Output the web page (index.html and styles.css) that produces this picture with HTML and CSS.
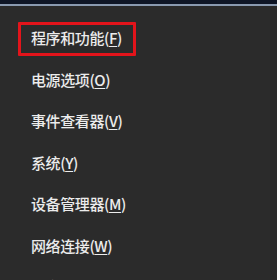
FILE: index.html
```html
<!DOCTYPE html>
<html>
<head>
<meta charset="utf-8">
<link rel="stylesheet" href="styles.css">
</head>
<body>
<div class="screen">
  <div class="topbar"></div>
  <ul class="menu">
    <li class="item first">程序和功能(<u>F</u>)<span class="mark"></span></li>
    <li class="item">电源选项(<u>O</u>)</li>
    <li class="item">事件查看器(<u>V</u>)</li>
    <li class="item">系统(<u>Y</u>)</li>
    <li class="item">设备管理器(<u>M</u>)</li>
    <li class="item">网络连接(<u>W</u>)</li>
    <li class="item">磁盘管理(<u>K</u>)</li>
  </ul>
</div>
</body>
</html>
```
FILE: styles.css
```css
html, body {
  margin: 0;
  padding: 0;
  background: #2b2b2b;
  overflow: hidden;
}
.screen {
  width: 277px;
  height: 280px;
  background: #2b2b2b;
  overflow: hidden;
  position: relative;
}
.topbar {
  height: 4px;
  background: #0f1626;
  border-bottom: 2px solid #8a9ab0;
}
.menu {
  list-style: none;
  margin: 0;
  padding: 11px 0 0 0;
}
.item {
  height: 41.5px;
  line-height: 41.5px;
  padding-left: 31px;
  color: #ececec;
  font-family: "Noto Sans CJK SC", "Microsoft YaHei", sans-serif;
  font-size: 15px;
  font-weight: 500;
  letter-spacing: -0.4px;
  white-space: nowrap;
  position: relative;
}
.item u {
  text-decoration-thickness: 1px;
  text-underline-offset: 2px;
}
.mark {
  position: absolute;
  left: 18px;
  top: 5px;
  width: 112px;
  height: 28px;
  border: 3px solid #e3141b;
  border-radius: 1px;
}
```
